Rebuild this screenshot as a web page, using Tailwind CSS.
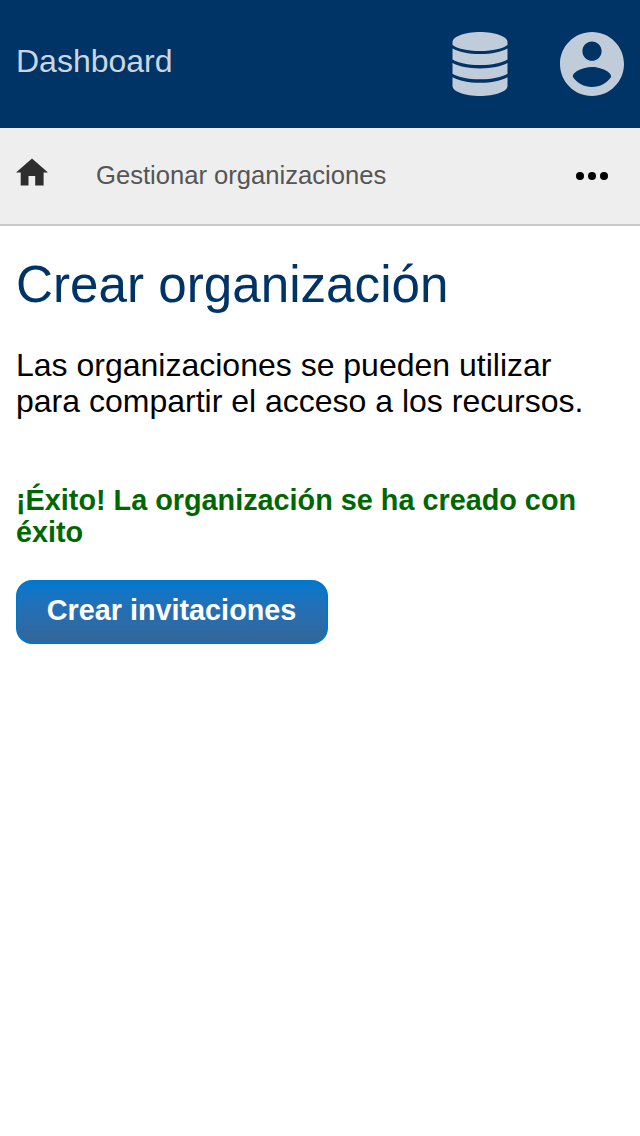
<!DOCTYPE html>
<html lang="es"><head><meta charset="utf-8"><title>Crear organización</title>
<script src="https://cdn.jsdelivr.net/npm/@tailwindcss/browser@4"></script></head>
<body class="bg-white text-black font-['Liberation_Sans',Arial,sans-serif]">
<header class="h-32 bg-[#003366] flex items-center justify-between px-4 text-[#c0ccd9]">
<span class="text-[32px] leading-9 -mt-1.5 text-[#ccd6e0]">Dashboard</span>
<div class="flex items-center gap-[52px]">
<svg class="w-14 h-16" viewBox="0 0 56 64" fill="currentColor"><path d="M28 0C13 0 .5 4.500.5 10V13C5 16.500 15 19 28 19S51 16.500 55.500 13V10C55.500 4.500 43 0 28 0z"/><path d="M.5 16.500C7 20 16 22 28 22S49 20 55.500 16.500V27.500C50 31 40 33 28 33S6 31 .5 27.500z"/><path d="M.5 31C7 34.500 16 36.400 28 36.400S49 34.500 55.500 31V41.700C50 45.200 40 47.300 28 47.300S6 45.200.5 41.700z"/><path d="M.5 45.300C7 48.800 16 50.800 28 50.800S49 48.800 55.500 45.300V54C55.500 59.500 43 64 28 64S.5 59.500.5 54z"/></svg>
<svg class="w-16 h-16" viewBox="2 2 20 20" fill="currentColor"><path d="M12 2C6.480 2 2 6.480 2 12s4.480 10 10 10 10-4.480 10-10S17.520 2 12 2zm0 3c1.660 0 3 1.340 3 3s-1.340 3-3 3-3-1.340-3-3 1.340-3 3-3zm0 14.200c-2.500 0-4.710-1.280-6-3.220.03-1.990 4-3.080 6-3.080 1.990 0 5.970 1.090 6 3.080-1.290 1.940-3.500 3.220-6 3.220z"/></svg>
</div></header>
<nav class="h-[98px] bg-[#eeeeee] border-b-2 border-[#c8c8c8] flex items-center px-4">
<svg class="w-8 h-7 -mt-2" viewBox="0 0 32 28" fill="#2e2e2e"><path d="M16 .5 32 14.500H27.600V27.500H19.200V18H12.500V27.500H4.700V14.500H0z"/></svg>
<span class="ml-12 -mt-0.5 text-[25.6px] text-[#555]">Gestionar organizaciones</span>
<svg class="ml-auto mr-4 w-8 h-2" viewBox="0 0 32 8"><circle cx="4" cy="4" r="4"/><circle cx="16" cy="4" r="4"/><circle cx="28" cy="4" r="4"/></svg>
</nav>
<main class="px-4">
<h1 class="pt-[30px] text-[51.2px] leading-[58px] text-[#003366]">Crear organización</h1>
<p class="mt-[33px] text-[32px] leading-9">Las organizaciones se pueden utilizar<br>para compartir el acceso a los recursos.</p>
<p class="mt-[65px] text-[28.8px] leading-8 font-bold text-[#006600]">¡Éxito! La organización se ha creado con éxito</p>
<button class="mt-8 w-[312px] h-16 rounded-2xl border-2 border-[#0077cc] bg-linear-to-b from-[#0077cc] to-[#336699] text-white font-bold text-[28.8px] leading-8 pb-1 pr-px">Crear invitaciones</button>
</main></body></html>
